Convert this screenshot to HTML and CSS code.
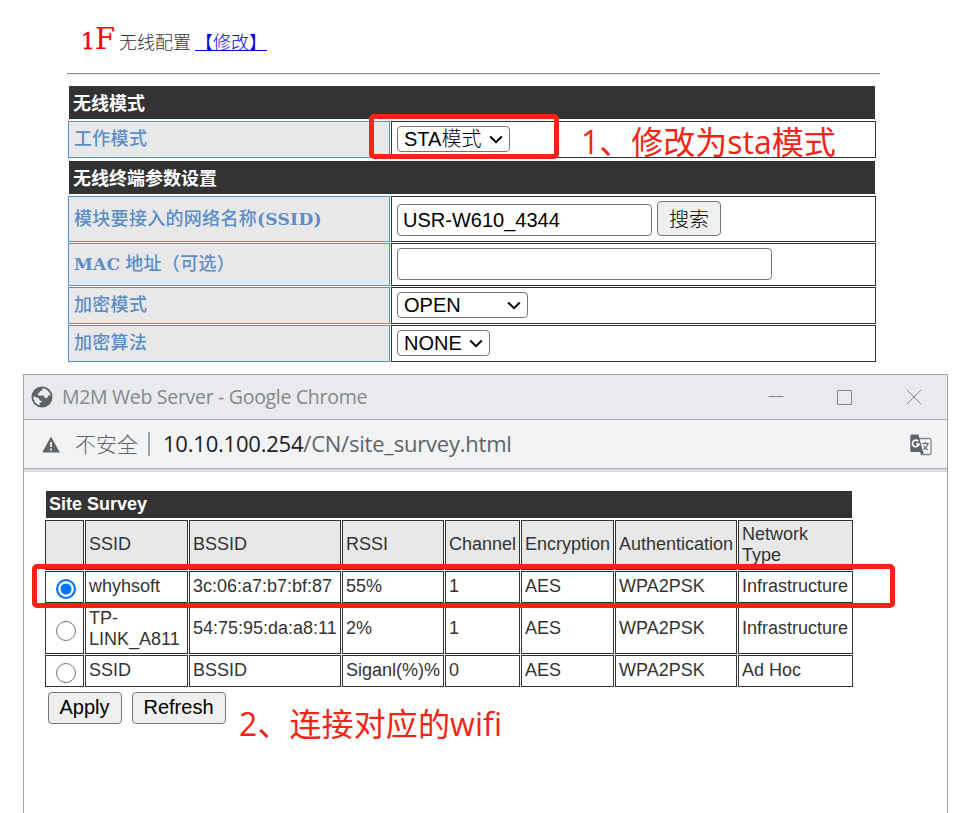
FILE: index.html
```html
<!DOCTYPE html>
<html lang="zh-CN">
<head>
<meta charset="utf-8">
<title>无线配置</title>
<link rel="stylesheet" href="styles.css">
</head>
<body>
<main class="page">
  <header class="heading">
    <span class="floor"><span class="floor-num">1</span>F</span>
    <span class="heading-text">无线配置</span>
    <a class="edit" href="#">【修改】</a>
  </header>
  <hr class="rule">

  <section class="config">
    <h2 class="bar">无线模式</h2>
    <div class="row">
      <div class="label">工作模式</div>
      <div class="value"><span class="select mode">STA模式<svg class="chev" viewBox="0 0 14 9"><path d="M1.2 1.5 7 7.2l5.800-5.700"/></svg></span></div>
    </div>
    <h2 class="bar second">无线终端参数设置</h2>
    <div class="row ssid">
      <div class="label">模块要接入的网络名称<span class="lat">(SSID)</span></div>
      <div class="value"><input class="field" type="text" value="USR-W610_4344"><button class="btn search">搜索</button></div>
    </div>
    <div class="row mac">
      <div class="label"><span class="lat">MAC</span>&nbsp;地址（可选）</div>
      <div class="value"><input class="field wide" type="text"></div>
    </div>
    <div class="row">
      <div class="label">加密模式</div>
      <div class="value"><span class="select open">OPEN<svg class="chev" viewBox="0 0 14 9"><path d="M1.200 1.500 7 7.200l5.800-5.700"/></svg></span></div>
    </div>
    <div class="row">
      <div class="label">加密算法</div>
      <div class="value"><span class="select none">NONE<svg class="chev" viewBox="0 0 14 9"><path d="M1.200 1.500 7 7.200l5.800-5.700"/></svg></span></div>
    </div>
  </section>

  <section class="window">
    <div class="titlebar">
      <svg class="globe" viewBox="0 0 22 22"><circle cx="11" cy="11" r="10.500" fill="#5f6368"/><path d="M11.500 2.300c.2 1.500-.5 2.500-2 2.700-.8.200-.5 1.500-1.500 1.800-1.300.400-.5 2-1.500 2.700h5c1.800 0 2 1.200 2 2.500h2c1.500 0 1.500-1.500 1.500-2.500h2.500a8.700 8.700 0 0 0-8-7.200zM2.400 10.300a8.700 8.700 0 0 0 6.300 9.100v-2.700c1.700 0 2.300-.800 2.300-2h-2.200c-.3-2-1.300-2.700-2.800-3.200z" fill="#e8eaed"/></svg>
      <span class="win-title">M2M Web Server - Google Chrome</span>
      <div class="controls">
        <svg viewBox="0 0 16 16"><path d="M.5 7.500h15"/></svg>
        <svg viewBox="0 0 16 16"><path d="M.5 1.500h14v14H.5z"/></svg>
        <svg viewBox="0 0 16 16"><path d="M.8.800l14.400 14.400M15.200.800.8 15.200"/></svg>
      </div>
    </div>
    <div class="address">
      <svg class="warn" viewBox="0 0 18 17"><path d="M9 .5 17.800 16.500H.2z" fill="#5f6368"/><path d="M9 6v5M9 12.500v2" stroke="#f1f3f4" stroke-width="1.800"/></svg>
      <span class="unsafe">不安全</span>
      <span class="sep"></span>
      <span class="url"><span class="host">10.10.100.254</span>/CN/site_survey.html</span>
      <svg class="translate" viewBox="0 0 22 22"><path d="M9 4.500h10.800q1.200 0 1.200 1.200v13.600q0 1.200-1.200 1.200h-8.300l2-3" fill="#f8f9fa" stroke="#85888b" stroke-width="1.300"/><path d="M1.800.500h6.700l4.500 17.500H1.800Q.3 18 .3 16.500V2Q.3.500 1.800.500z" fill="#5f6368"/><path d="M10 18h4l-2.800 3z" fill="#5f6368"/><path d="M8.300 7.300A3.300 3.300 0 1 0 9 10H6" fill="none" stroke="#fff" stroke-width="1.600"/><path d="M12 9.500h7M15.500 7.800v1.700M17.800 9.500c-.6 3-2.300 4.800-4.300 6M13.500 11.500c1 2 2.700 3.500 4.500 4.500" fill="none" stroke="#5f6368" stroke-width="1.200"/></svg>
    </div>

    <div class="survey">
      <h2 class="survey-bar">Site Survey</h2>
      <div class="grid">
        <div class="th"></div><div class="th">SSID</div><div class="th">BSSID</div><div class="th">RSSI</div><div class="th">Channel</div><div class="th">Encryption</div><div class="th">Authentication</div><div class="th">Network<br>Type</div>
        <div class="td pick"><i class="radio on"></i></div><div class="td">whyhsoft</div><div class="td">3c:06:a7:b7:bf:87</div><div class="td">55%</div><div class="td">1</div><div class="td">AES</div><div class="td">WPA2PSK</div><div class="td">Infrastructure</div>
        <div class="td pick"><i class="radio"></i></div><div class="td two">TP-<br>LINK_A811</div><div class="td">54:75:95:da:a8:11</div><div class="td">2%</div><div class="td">1</div><div class="td">AES</div><div class="td">WPA2PSK</div><div class="td">Infrastructure</div>
        <div class="td pick"><i class="radio"></i></div><div class="td">SSID</div><div class="td">BSSID</div><div class="td">Siganl(%)%</div><div class="td">0</div><div class="td">AES</div><div class="td">WPA2PSK</div><div class="td">Ad Hoc</div>
      </div>
      <div class="actions"><button class="btn apply">Apply</button><button class="btn refresh">Refresh</button></div>
    </div>
  </section>

  <div class="mark mark-mode"></div>
  <div class="mark mark-network"></div>
  <p class="note note-mode">1、修改为sta模式</p>
  <p class="note note-wifi">2、连接对应的wifi</p>
</main>
</body>
</html>
```
FILE: styles.css
```css
* { box-sizing: border-box; }
body { margin: 0; background: #fff; }
.page {
  position: relative;
  width: 960px;
  height: 813px;
  overflow: hidden;
  font-family: "Liberation Sans", "Noto Sans CJK SC", sans-serif;
  color: #333;
}

.heading {
  display: flex;
  align-items: baseline;
  height: 73px;
  padding: 19px 0 0 81px;
  font: 300 18px/40px "Liberation Serif", "Noto Sans CJK SC", serif;
}
.floor { width: 38px; font-family: "DejaVu Serif", serif; font-size: 29px; color: #f00; white-space: nowrap; }
.floor-num { font-size: 22px; -webkit-text-stroke: .4px #f00; }
.heading-text { width: 76px; }
.edit { line-height: 22px; color: #00e; }
.rule { width: 813px; height: 2px; margin: 0 0 11px 67px; border: 0; border-top: 1px solid #8c8c8c; border-bottom: 1px solid #eee; }

.config { width: 808px; margin-left: 68px; }
.bar {
  height: 33px;
  margin: 0 1px 2px;
  padding-left: 4px;
  background: #333;
  color: #fff;
  font: bold 18px/33px "Noto Sans CJK SC", sans-serif;
}
.bar.second { margin-top: 3px; }
.row { display: grid; grid-template-columns: 322px 485px; gap: 1px; height: 37px; }
.row + .row { margin-top: 1px; }
.row.ssid { height: 46px; }
.row.mac { height: 43px; }
.label {
  display: flex;
  align-items: center;
  padding: 0 0 1px 5px;
  border: 1px solid #5590c8;
  background: #e8e8e8;
  color: #5b8dc9;
  font: 500 18px/26px "Liberation Serif", "Noto Sans CJK SC", serif;
  letter-spacing: .3px;
}
.lat { font-family: "DejaVu Serif", serif; font-weight: bold; font-size: 17px; }
.value { display: flex; align-items: center; padding-left: 5px; border: 1px solid #333; }
.field, .btn, .select {
  border: 1px solid #767676;
  border-radius: 4px;
  background: #fff;
  color: #000;
  font: 20px/24px "Liberation Sans", "Noto Sans CJK SC", sans-serif;
}
.field { width: 255px; height: 32px; padding: 0 5px; }
.ssid .field { margin-top: 2px; }
.wide { width: 375px; margin-bottom: 1px; }
.btn { height: 32px; padding: 0 1px 2px 0; background: #efefef; text-align: center; }
.search { width: 64px; height: 35px; margin: 0 0 1px 5px; padding: 3px 0 0; font-weight: 300; }
.select { display: flex; align-items: center; justify-content: space-between; height: 26px; padding: 0 6px; margin-bottom: 1px; }
.mode { width: 113px; font-weight: 300; }
.open { width: 131px; }
.none { width: 93px; }
.chev { width: 14px; height: 9px; fill: none; stroke: #000; stroke-width: 2; }

.window {
  width: 925px;
  height: 450px;
  margin: 12px 0 0 23px;
  border: 1px solid #a3a3a3;
}
.titlebar {
  display: flex;
  align-items: center;
  height: 45px;
  padding: 0 25px 0 7px;
  border-bottom: 1px solid #a5a7aa;
  background: #e8eaed;
}
.globe { width: 22px; height: 22px; }
.win-title { margin-left: 9px; font: 19.500px/28px "Open Sans", sans-serif; letter-spacing: -.3px; color: #85888c; white-space: nowrap; }
.controls { display: flex; gap: 53px; margin-left: auto; }
.controls svg { width: 16px; height: 16px; fill: none; stroke: #85888b; stroke-width: 1; }
.address {
  display: flex;
  align-items: center;
  height: 52px;
  padding: 0 15px 2px 18px;
  border-bottom: 3px solid #d9dbde;
  background: #f1f3f4;
  box-shadow: inset 0 -1px #aaacae;
  color: #5f6368;
}
.warn { width: 18px; height: 17px; margin-top: 2px; }
.unsafe { width: 64px; margin: -2px 0 0 15px; font: 300 21px/30px "Noto Sans CJK SC", sans-serif; white-space: nowrap; }
.sep { width: 2px; height: 24px; margin-left: 9px; background: #a0a3a6; }
.url { margin: -2px 0 0 13px; font: 22px/30px "Open Sans", sans-serif; letter-spacing: -.22px; white-space: nowrap; }
.host { color: #202124; }
.translate { width: 22px; height: 22px; margin: 2px 0 0 auto; }

.survey { width: 808px; margin: 19px 0 0 21px; }
.survey-bar { height: 27px; margin: 0 1px 2px; padding-left: 3px; background: #333; color: #fff; font: bold 18px/27px "Liberation Sans", sans-serif; }
.grid {
  display: grid;
  grid-template-columns: 39px 103px 152px 102px 75px 93px 122px 115px;
  grid-template-rows: 50px 32px 50px 32px;
  gap: 1px;
}
.th, .td { display: flex; align-items: center; padding: 0 0 2px 3px; border: 1px solid #333; font-size: 18px; line-height: 21px; white-space: nowrap; }
.th { padding-bottom: 1px; background: #e8e8e8; }
.two { padding-bottom: 0; }
.pick { padding: 3px 0 0 10px; }
.radio { display: block; width: 20px; height: 20px; border: 1.500px solid #767676; border-radius: 50%; }
.radio.on { border: 2px solid #0075ff; background: #0075ff; box-shadow: inset 0 0 0 2.500px #fff; }
.actions { display: flex; gap: 10px; margin: 5px 0 0 3px; }
.apply { width: 74px; }
.refresh { width: 94px; }

.mark { position: absolute; border: 5px solid #f52314; border-radius: 5px; }
.mark-mode { left: 369px; top: 114px; width: 190px; height: 45px; }
.mark-network { left: 32px; top: 564px; width: 863px; height: 44px; }
.note { position: absolute; margin: 0; color: #f52314; font: 400 32px/40px "Open Sans", "Noto Sans CJK SC", sans-serif; white-space: nowrap; }
.note-mode { left: 581px; top: 122px; }
.note-wifi { left: 239px; top: 704px; letter-spacing: .1px; }
```
